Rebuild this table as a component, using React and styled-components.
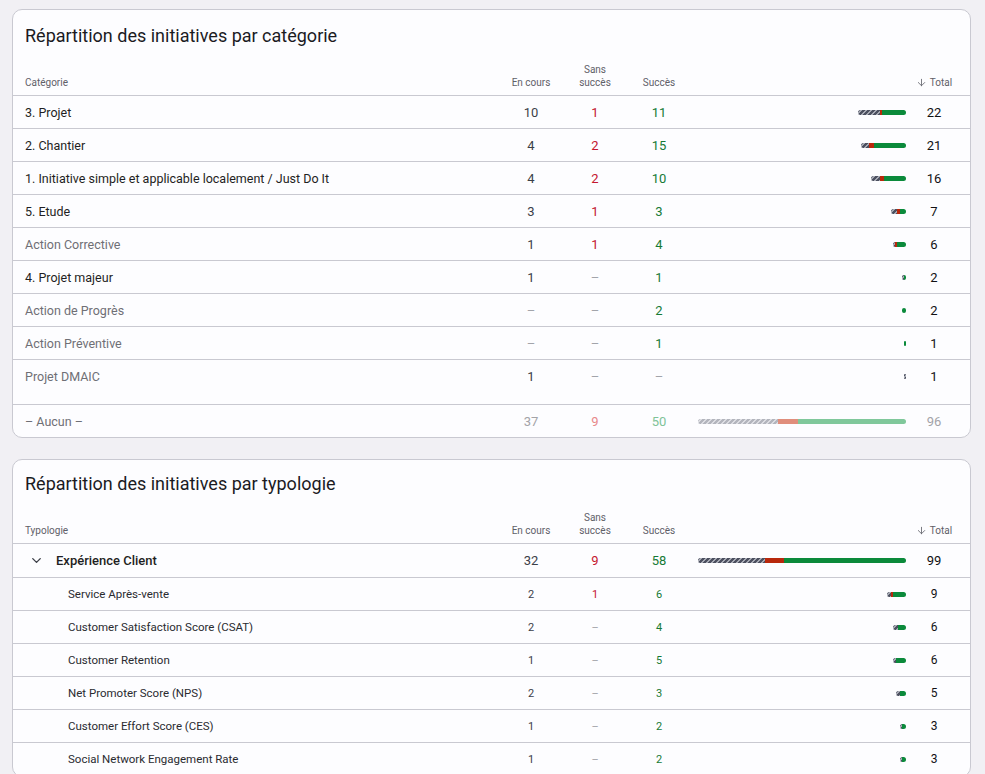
import styled, { createGlobalStyle } from "styled-components";
import { ChevronDown, ArrowDown } from "lucide-react";

const GlobalStyle = createGlobalStyle`
  html, body {
    margin: 0;
    padding: 0;
    background: #f1f0f4;
    overflow: hidden;
  }
  body {
    font-family: Roboto, "Liberation Sans", sans-serif;
    color: #1f1f1f;
  }
`;

const categories = [
  { label: "3. Projet", cours: 10, echec: 1, succes: 11 },
  { label: "2. Chantier", cours: 4, echec: 2, succes: 15 },
  { label: "1. Initiative simple et applicable localement / Just Do It", cours: 4, echec: 2, succes: 10 },
  { label: "5. Etude", cours: 3, echec: 1, succes: 3 },
  { label: "Action Corrective", cours: 1, echec: 1, succes: 4, muted: true },
  { label: "4. Projet majeur", cours: 1, echec: 0, succes: 1 },
  { label: "Action de Progrès", cours: 0, echec: 0, succes: 2, muted: true },
  { label: "Action Préventive", cours: 0, echec: 0, succes: 1, muted: true },
  { label: "Projet DMAIC", cours: 1, echec: 0, succes: 0, muted: true },
];

const typologies = [
  { label: "Service Après-vente", cours: 2, echec: 1, succes: 6 },
  { label: "Customer Satisfaction Score (CSAT)", cours: 2, echec: 0, succes: 4 },
  { label: "Customer Retention", cours: 1, echec: 0, succes: 5 },
  { label: "Net Promoter Score (NPS)", cours: 2, echec: 0, succes: 3 },
  { label: "Customer Effort Score (CES)", cours: 1, echec: 0, succes: 2 },
  { label: "Social Network Engagement Rate", cours: 1, echec: 0, succes: 2 },
];

const BAR_MAX = 208;

const total = (r) => r.cours + r.echec + r.succes;

const StackBar = ({ row, max, faded }) => {
  const scale = BAR_MAX / max;
  return (
    <BarCell>
      <Bar>
        <Seg $kind="cours" $faded={faded} style={{ width: row.cours * scale }} />
        <Seg $kind="echec" $faded={faded} style={{ width: row.echec * scale }} />
        <Seg $kind="succes" $faded={faded} style={{ width: row.succes * scale }} />
      </Bar>
    </BarCell>
  );
};

const Num = ({ value, kind, size, faded }) =>
  value ? (
    <Value $kind={kind} $size={size} $faded={faded}>{value}</Value>
  ) : (
    <Value $kind="dash" $size={size}>–</Value>
  );

const HeaderRow = ({ label }) => (
  <Head>
    <HeadLabel $left>{label}</HeadLabel>
    <HeadLabel>En cours</HeadLabel>
    <HeadLabel>Sans<br />succès</HeadLabel>
    <HeadLabel>Succès</HeadLabel>
    <span />
    <HeadLabel>
      <ArrowDown size={11} strokeWidth={1.8} /> Total
    </HeadLabel>
  </Head>
);

const App = () => {
  const catMax = 96;
  const expTotals = { cours: 32, echec: 9, succes: 58 };
  return (
    <Page>
      <GlobalStyle />
      <Card>
        <Title>Répartition des initiatives par catégorie</Title>
        <HeaderRow label="Catégorie" />
        <Body>
          {categories.map((r) => (
            <Row key={r.label}>
              <Label $muted={r.muted}>{r.label}</Label>
              <Num value={r.cours} kind="cours" />
              <Num value={r.echec} kind="echec" />
              <Num value={r.succes} kind="succes" />
              <StackBar row={r} max={catMax} />
              <Total>{total(r)}</Total>
            </Row>
          ))}
        </Body>
        <Row $last>
          <Label $muted>– Aucun –</Label>
          <Num value={37} kind="cours" faded />
          <Num value={9} kind="echec" faded />
          <Num value={50} kind="succes" faded />
          <StackBar row={{ cours: 37, echec: 9, succes: 50 }} max={catMax} faded />
          <Total $faded>96</Total>
        </Row>
      </Card>

      <Card>
        <Title $compact>Répartition des initiatives par typologie</Title>
        <HeaderRow label="Typologie" />
        <Row $group>
          <GroupLabel>
            <ChevronDown size={15} strokeWidth={2.2} />
            Expérience Client
          </GroupLabel>
          <Num value={32} kind="cours" />
          <Num value={9} kind="echec" />
          <Num value={58} kind="succes" />
          <StackBar row={expTotals} max={99} />
          <Total>99</Total>
        </Row>
        {typologies.map((r) => (
          <Row key={r.label}>
            <SubLabel>{r.label}</SubLabel>
            <Num value={r.cours} kind="cours" size="small" />
            <Num value={r.echec} kind="echec" size="small" />
            <Num value={r.succes} kind="succes" size="small" />
            <StackBar row={r} max={99} />
            <Total $size="small">{total(r)}</Total>
          </Row>
        ))}
      </Card>
    </Page>
  );
};

export default App;

const Page = styled.div`
  display: flex;
  flex-direction: column;
  gap: 21px;
  padding: 9px 14px 0 12px;
`;

const Card = styled.section`
  background: #fdfdff;
  border: 1px solid #c9c9d1;
  border-radius: 10px;
  overflow: hidden;
`;

const Title = styled.h2`
  margin: 0;
  padding: ${(p) => (p.$compact ? 12 : 14)}px 12px 0;
  font-size: 18px;
  line-height: 24px;
  font-weight: 400;
  color: #1b1b1f;
`;

const grid = `
  display: grid;
  grid-template-columns: 1fr 64px 64px 64px 215px 56px;
  align-items: center;
  padding: 0 8px 0 12px;
`;

const Head = styled.div`
  ${grid}
  align-items: end;
  height: 48px;
  padding-bottom: 6px;
  box-sizing: border-box;
  border-bottom: 1px solid #c9c9d1;
`;

const HeadLabel = styled.span`
  display: flex;
  align-items: center;
  justify-content: ${(p) => (p.$left ? "flex-start" : "center")};
  gap: 3px;
  font-size: 10px;
  line-height: 13px;
  color: #5f6068;
  text-align: ${(p) => (p.$left ? "left" : "center")};
  white-space: nowrap;
`;

const Body = styled.div`
  padding-bottom: 12px;
  border-bottom: 1px solid #c9c9d1;

  & > div:last-child {
    border-bottom: none;
  }
`;

const Row = styled.div`
  ${grid}
  height: ${(p) => (p.$group ? 33 : 32)}px;
  border-bottom: ${(p) => (p.$last ? "none" : "1px solid #c9c9d1")};
`;

const Label = styled.span`
  font-size: 12.5px;
  color: ${(p) => (p.$muted ? "#6f6f75" : "#1f1f23")};
  white-space: nowrap;
`;

const GroupLabel = styled.span`
  display: flex;
  align-items: center;
  gap: 12px;
  padding-left: 4px;
  font-size: 13px;
  font-weight: 500;
  color: #1f1f23;

  svg {
    color: #3c3f47;
  }
`;

const SubLabel = styled.span`
  padding-left: 43px;
  font-size: 11.5px;
  color: #2a2b30;
  white-space: nowrap;
`;

const valueColors = {
  cours: ["#3b3f48", "#a3a3a8"],
  echec: ["#c4162f", "#e8898a"],
  succes: ["#167a36", "#7fc398"],
  dash: ["#a2a4aa", "#a2a4aa"],
};

const Value = styled.span`
  text-align: center;
  font-size: ${(p) => (p.$size === "small" ? 11 : 13)}px;
  color: ${(p) => valueColors[p.$kind][p.$faded ? 1 : 0]};
`;

const Total = styled.span`
  text-align: center;
  font-size: ${(p) => (p.$size === "small" ? 12 : 13)}px;
  color: ${(p) => (p.$faded ? "#a3a3a8" : "#111114")};
`;

const BarCell = styled.div`
  display: flex;
  justify-content: flex-end;
`;

const Bar = styled.div`
  display: flex;
  height: 5px;
  border-radius: 3px;
  overflow: hidden;
`;

const segBg = {
  cours: [
    "repeating-linear-gradient(135deg, #4c5060 0 2px, #a6a9b3 2px 3.5px)",
    "repeating-linear-gradient(135deg, #b3b5bd 0 2px, #dcdde2 2px 3.5px)",
  ],
  echec: ["#b8280c", "#e08e7c"],
  succes: ["#0b8a3b", "#80c89b"],
};

const Seg = styled.div`
  height: 100%;
  background: ${(p) => segBg[p.$kind][p.$faded ? 1 : 0]};
`;
